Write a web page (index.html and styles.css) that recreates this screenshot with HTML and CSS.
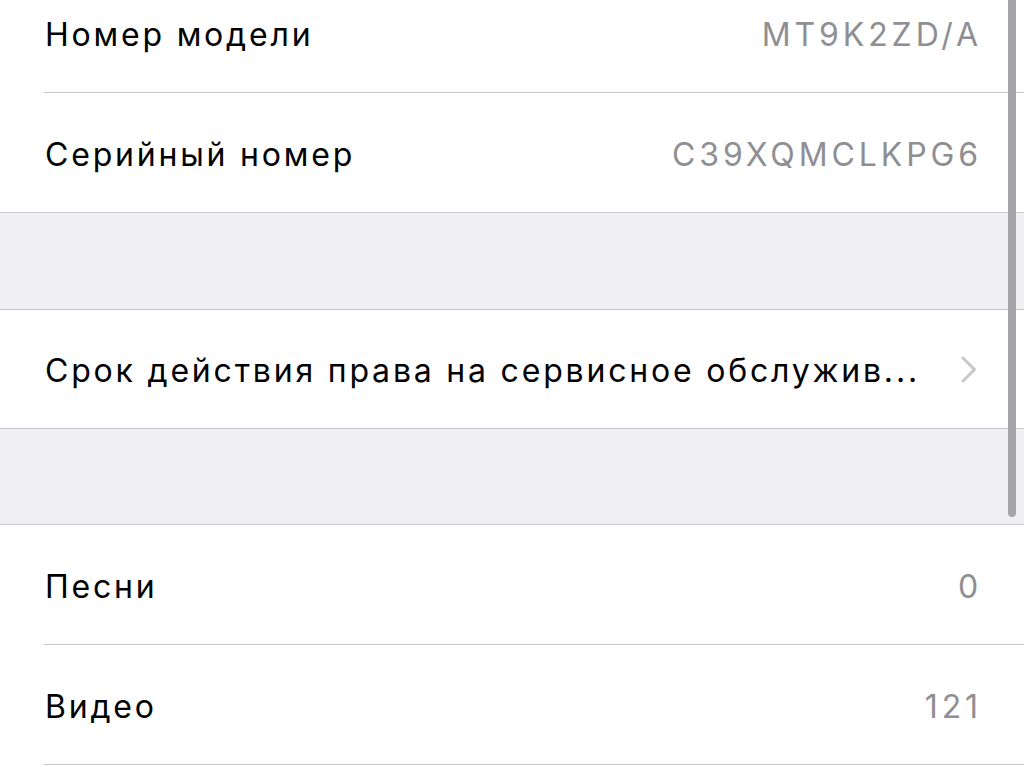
FILE: index.html
```html
<!DOCTYPE html>
<html>
<head>
    <title>Об этом устройстве</title>
    <link rel="stylesheet" href="styles.css">
</head>
<body>

<div class="screen">
    <div class="table">
        <div class="group first">
            <div class="row">
                <div class="cell">
                    <span class="label">Номер модели</span>
                    <span class="value">MT9K2ZD/A</span>
                </div>
            </div>
            <div class="row">
                <div class="cell">
                    <span class="label">Серийный номер</span>
                    <span class="value">C39XQMCLKPG6</span>
                </div>
            </div>
        </div>

        <div class="group single">
            <div class="row">
                <div class="cell">
                    <span class="label">Срок действия права на сервисное обслужив...</span>
                    <svg class="chevron" width="16" height="27" viewBox="0 0 16 27">
                        <path d="M2 2 L13.5 13.5 L2 25" fill="none" stroke="#c7c7cc" stroke-width="3" stroke-linecap="round" stroke-linejoin="round"/>
                    </svg>
                </div>
            </div>
        </div>

        <!-- this group goes on below the fold -->
        <div class="group open">
            <div class="row">
                <div class="cell">
                    <span class="label">Песни</span>
                    <span class="value">0</span>
                </div>
            </div>
            <div class="row">
                <div class="cell">
                    <span class="label">Видео</span>
                    <span class="value">121</span>
                </div>
            </div>
        </div>
    </div>

    <div class="scrollbar"></div>
</div>

</body>
</html>
```

FILE: styles.css
```css
html, body {
    margin: 0;
    padding: 0;
    height: 100%;
    overflow: hidden;
}

body {
    font-family: 'Inter', 'Liberation Sans', Arial, sans-serif;
    background-color: #efeff4;
    -webkit-font-smoothing: antialiased;
}

.screen {
    position: relative;
    height: 767px;
    overflow: hidden;
}

/* list is scrolled, so the first row is cut at the top */
.table {
    margin-top: -28px;
}

.group {
    background-color: #fff;
    border-top: 1px solid #c8c7cc;
    border-bottom: 1px solid #c8c7cc;
    margin-top: 96px;
}

.group.first {
    margin-top: 0;
}

.group.open {
    margin-top: 95px;
    border-bottom: none;
    padding-bottom: 10px;
}

.row {
    padding-left: 44px;
}

.cell {
    height: 119px;
    display: flex;
    align-items: center;
    justify-content: space-between;
    padding-right: 46px;
    padding-left: 1px;
    border-bottom: 1px solid #c8c7cc;
    font-size: 32px;
}

.group.single .cell {
    height: 118px;
}

.group .row:last-child .cell {
    border-bottom: none;
}

.group.open .row:last-child .cell {
    border-bottom: 1px solid #c8c7cc;
}

.label {
    color: #000;
    white-space: nowrap;
    padding-top: 3px;
    letter-spacing: 2.8px;
}

.value {
    color: #8e8e93;
    white-space: nowrap;
    padding-top: 3px;
    letter-spacing: 3.9px;
    margin-right: -4px;
}

.chevron {
    display: block;
    margin-right: 1px;
}

.scrollbar {
    position: absolute;
    top: -20px;
    right: 8px;
    width: 8px;
    height: 537px;
    border-radius: 4px;
    background-color: #a6a6a9;
}
```
